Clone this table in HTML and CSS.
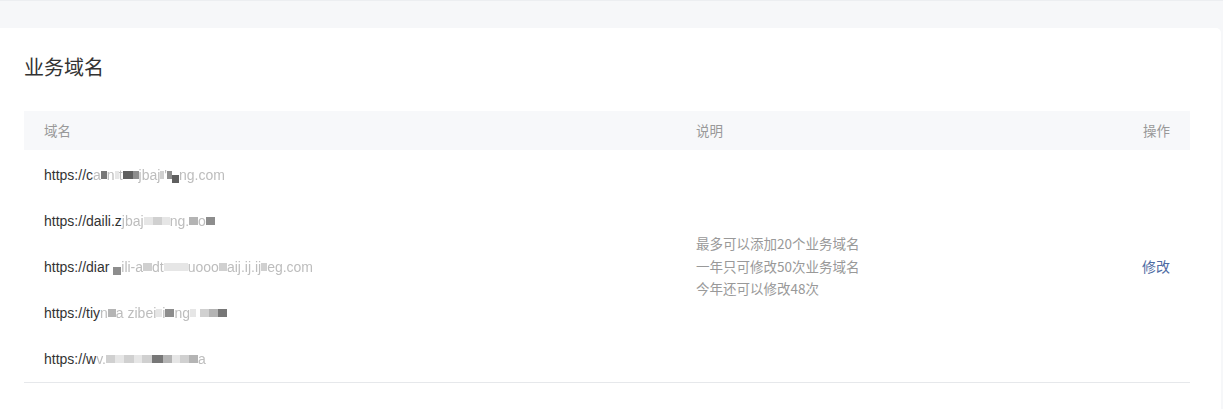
FILE: index.html
```html
<!DOCTYPE html>
<html lang="zh-CN">
<head>
<meta charset="utf-8">
<title>业务域名</title>
<link rel="stylesheet" href="styles.css">
</head>
<body>
<div class="page">
  <div class="topband"></div>
  <section class="card">
    <h2 class="title">业务域名</h2>
    <div class="table">
      <div class="th th-domain">域名</div>
      <div class="th th-desc">说明</div>
      <div class="th th-op">操作</div>

      <div class="td td-domain">
        <div class="url">https://c<span class="m">a</span><i class="b b6 d2"></i><span class="m">n</span><i class="b b4 l1"></i><span class="m">t</span><i class="b b10 d1"></i><i class="b b6 d3"></i><span class="m">jbaj</span><i class="b b4 l2"></i><span class="m">'</span><i class="b b5 d3"></i><i class="b b7 d1 low"></i><span class="m">ng.com</span></div>
        <div class="url">https://daili.z<span class="m">jbaj</span><i class="b b9 l1"></i><i class="b b9 l2"></i><i class="b b8 l1"></i><span class="m">ng.</span><i class="b b9 l3"></i><span class="m">o</span><i class="b b9 d3"></i></div>
        <div class="url">https://diar <i class="b b8 d3 low"></i><span class="m">ili-a</span><i class="b b9 l2"></i><span class="m">dt</span><i class="b b12 l1"></i><i class="b b12 l1"></i><span class="m">uooo</span><i class="b b8 l2"></i><span class="m">aij.ij.ij</span><i class="b b6 l2"></i><span class="m">eg.com</span></div>
        <div class="url">https://tiy<span class="m">n</span><i class="b b8 l3"></i><span class="m">a zibei</span><i class="b b6 l1"></i><span class="m">i</span><i class="b b9 d3"></i><span class="m">ng</span><i class="b b6 l1"></i> <i class="b b9 l2"></i><i class="b b9 l3"></i><i class="b b9 d2"></i></div>
        <div class="url">https://w<span class="m">v.</span><i class="b b9 l2"></i><i class="b b9 l1"></i><i class="b b10 l2"></i><i class="b b8 l1"></i><i class="b b10 l2"></i><i class="b b11 d2"></i><i class="b b9 l3"></i><i class="b b8 l1"></i><i class="b b9 l2"></i><i class="b b9 l3"></i><span class="m">a</span></div>
      </div>
      <div class="td td-desc">
        <p>最多可以添加20个业务域名</p>
        <p>一年只可修改50次业务域名</p>
        <p>今年还可以修改48次</p>
      </div>
      <div class="td td-op"><a class="link" href="#">修改</a></div>
    </div>
  </section>
</div>
</body>
</html>
```

FILE: styles.css
```css
* { box-sizing: border-box; }
html, body { margin: 0; padding: 0; }
body {
  background: #f6f7f9;
  font-family: "Liberation Sans", "Noto Sans CJK SC", sans-serif;
  color: #333;
  width: 1223px;
  height: 409px;
  overflow: hidden;
}
.page {
  display: flex;
  flex-direction: column;
  height: 409px;
}
.topband {
  height: 28px;
  border-top: 1px solid #eceef1;
  flex: none;
}
.card {
  flex: 1;
  width: 1221px;
  background: #fff;
  border-top-right-radius: 5px;
  padding: 26px 31px 0 24px;
}
.title {
  margin: 0;
  font-family: "Noto Sans CJK SC", sans-serif;
  font-weight: 400;
  font-size: 20px;
  line-height: 26px;
  color: #333;
}
.table {
  margin-top: 31px;
  display: grid;
  grid-template-columns: 652px 1fr auto;
  border-bottom: 1px solid #e6e8eb;
}
.th {
  background: #f7f8fa;
  height: 39px;
  line-height: 39px;
  font-family: "Noto Sans CJK SC", sans-serif;
  font-size: 13.5px;
  color: #999;
}
.th-domain { padding-left: 20px; }
.th-desc { padding-left: 20px; }
.th-op { padding-right: 20px; text-align: right; }
.td-domain {
  padding: 2px 0 0 20px;
}
.url {
  height: 46px;
  line-height: 46px;
  font-size: 14px;
  color: #333;
  white-space: nowrap;
}
.m {
  color: #bdbdbd;
  filter: blur(0.6px);
}
.b {
  display: inline-block;
  height: 8px;
  vertical-align: middle;
  margin-top: -2px;
}
.low { vertical-align: -3px; }
.b4 { width: 4px; }
.b5 { width: 5px; }
.b6 { width: 6px; }
.b7 { width: 7px; }
.b8 { width: 8px; }
.b9 { width: 9px; }
.b10 { width: 10px; }
.b11 { width: 11px; }
.b12 { width: 12px; }
.d1 { background: #5f5f5f; }
.d2 { background: #777; }
.d3 { background: #8d8d8d; }
.l1 { background: #e6e6e6; }
.l2 { background: #d0d0d0; }
.l3 { background: #b4b4b4; }
.td-desc {
  padding-left: 20px;
  display: flex;
  flex-direction: column;
  justify-content: center;
  font-family: "Noto Sans CJK SC", sans-serif;
  font-size: 13.5px;
  color: #999;
}
.td-desc p {
  margin: 0;
  line-height: 22.5px;
}
.td-op {
  padding-right: 20px;
  display: flex;
  align-items: center;
  justify-content: flex-end;
}
.link {
  font-family: "Noto Sans CJK SC", sans-serif;
  font-size: 14px;
  color: #4e6ba3;
  text-decoration: none;
}
```
